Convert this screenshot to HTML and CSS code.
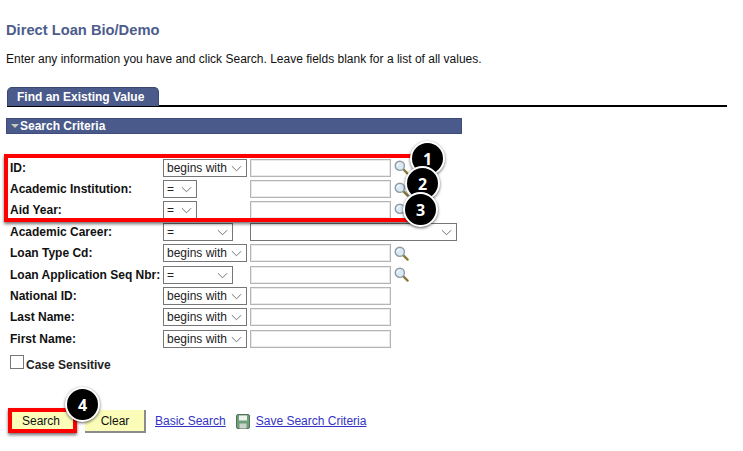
FILE: index.html
```html
<!DOCTYPE html>
<html lang="en">
<head>
<meta charset="utf-8">
<title>Direct Loan Bio/Demo</title>
<link rel="stylesheet" href="styles.css">
</head>
<body>
<svg class="defs" width="0" height="0" aria-hidden="true">
  <symbol id="lens" viewBox="0 0 16 16">
    <line x1="9.5" y1="9.5" x2="14.5" y2="14.5" stroke="#8a7a3a" stroke-width="2.4" stroke-linecap="round"/>
    <circle cx="6.2" cy="6.2" r="4.9" fill="#dbe9f2" stroke="#8c9ca8" stroke-width="1.5"/>
    <path d="M3.5 6a2.8 2.8 0 0 1 2.5-2.6" fill="none" stroke="#fff" stroke-width="1.2"/>
  </symbol>
  <symbol id="chev" viewBox="0 0 12 7">
    <path d="M1 1l5 5 5-5" fill="none" stroke="#666" stroke-width="1"/>
  </symbol>
</svg>
<main class="page">
  <h1 class="title">Direct Loan Bio/Demo</h1>
  <p class="intro">Enter any information you have and click Search. Leave fields blank for a list of all values.</p>
  <div class="tabs"><span class="tab">Find an Existing Value</span></div>
  <div class="band"><span class="caret"></span>Search Criteria</div>
  <div class="form">
    <label>ID:</label>
    <span class="sel w-b">begins with<svg class="chev"><use href="#chev"/></svg></span>
    <span class="inp"></span><svg class="lens"><use href="#lens"/></svg>

    <label>Academic Institution:</label>
    <span class="sel w-s">=<svg class="chev"><use href="#chev"/></svg></span>
    <span class="inp"></span><svg class="lens"><use href="#lens"/></svg>

    <label>Aid Year:</label>
    <span class="sel w-s">=<svg class="chev"><use href="#chev"/></svg></span>
    <span class="inp"></span><svg class="lens"><use href="#lens"/></svg>

    <label>Academic Career:</label>
    <span class="sel w-m">=<svg class="chev"><use href="#chev"/></svg></span>
    <span class="sel w-l"><svg class="chev"><use href="#chev"/></svg></span><span></span>

    <label>Loan Type Cd:</label>
    <span class="sel w-b">begins with<svg class="chev"><use href="#chev"/></svg></span>
    <span class="inp"></span><svg class="lens"><use href="#lens"/></svg>

    <label>Loan Application Seq Nbr:</label>
    <span class="sel w-m">=<svg class="chev"><use href="#chev"/></svg></span>
    <span class="inp"></span><svg class="lens"><use href="#lens"/></svg>

    <label>National ID:</label>
    <span class="sel w-b">begins with<svg class="chev"><use href="#chev"/></svg></span>
    <span class="inp"></span><span></span>

    <label>Last Name:</label>
    <span class="sel w-b">begins with<svg class="chev"><use href="#chev"/></svg></span>
    <span class="inp"></span><span></span>

    <label>First Name:</label>
    <span class="sel w-b">begins with<svg class="chev"><use href="#chev"/></svg></span>
    <span class="inp"></span><span></span>
  </div>
  <div class="case"><span class="check"></span><span>Case Sensitive</span></div>
  <div class="actions">
    <span class="btn btn-search">Search</span>
    <span class="btn btn-clear">Clear</span>
    <a class="link" href="#">Basic Search</a>
    <svg class="save" viewBox="0 0 14 15" aria-hidden="true">
      <rect x="0.5" y="0.5" width="13" height="14" rx="1.5" fill="#6f9f78" stroke="#55715c"/>
      <rect x="3" y="1.5" width="8" height="5" fill="#eef3ee"/>
      <rect x="3.5" y="9.5" width="7" height="5" fill="#c9d3cb"/>
    </svg>
    <a class="link" href="#">Save Search Criteria</a>
  </div>
</main>
<div class="mark mark-fields"></div>
<div class="mark mark-search"></div>
<span class="num n1">1</span>
<span class="num n2">2</span>
<span class="num n3">3</span>
<span class="num n4">4</span>
</body>
</html>
```
FILE: styles.css
```css
* { box-sizing: border-box; }
html, body { margin: 0; padding: 0; background: #fff; }
body {
  width: 743px; height: 451px; overflow: hidden; position: relative;
  font-family: "Liberation Sans", Arial, sans-serif; font-size: 12px; color: #000;
}
.defs { position: absolute; }
.page { padding: 22px 0 0 6px; }
.title { margin: 0; font-size: 14.7px; line-height: 16px; font-weight: bold; color: #4d5c8c; }
.intro { margin: 14px 0 0; font-size: 12px; line-height: 14px; color: #111; }
.tabs { margin: 21px 0 0 1px; height: 20px; border-bottom: 2px solid #000; width: 720px; }
.tab {
  display: inline-block; height: 19px; width: 152px; padding: 2px 0 0 9px;
  background: #4a5a8a; color: #fff; font-weight: bold; font-size: 12px; line-height: 15px;
  border-radius: 5px 5px 0 0; border: 1px solid #3b4872; border-bottom: 0;
}
.band {
  display: flex; align-items: center; margin: 11px 0 0; width: 456px; height: 16px;
  background: #4a5a8a; color: #fff; font-weight: bold; font-size: 12px;
  padding: 0 0 0 4px; border: 1px solid #3f4d7c;
}
.caret {
  width: 0; height: 0; margin: 0 1px 0 0;
  border-left: 4px solid transparent; border-right: 4px solid transparent; border-top: 4px solid #c9c9b8;
}
.form {
  display: grid; margin: 23px 0 0 4px;
  grid-template-columns: 153px 87px 143px 20px;
  grid-auto-rows: 21.4px; align-items: center; justify-items: start; width: 403px;
}
.form label { font-weight: bold; font-size: 12px; color: #111; white-space: nowrap; }
.sel {
  position: relative; display: block; height: 18px; border: 1px solid #767676; background: #fff;
  padding-left: 3px; font-size: 12px; line-height: 17px; color: #222;
}
.w-b { width: 84px; }
.w-s { width: 34px; }
.w-m { width: 70px; }
.w-l { width: 207px; margin-right: -85px; }
.chev { position: absolute; right: 4px; top: 5px; width: 11px; height: 7px; }
.inp { display: block; width: 141px; height: 18px; border: 1px solid #b4b4b4; box-shadow: inset 0 0 0 1px #eaeaea; background: #fff; }
.lens { width: 15px; height: 15px; margin: 0 0 0 1px; }
.case { display: flex; align-items: center; gap: 2px; margin: 6px 0 0 4px; font-weight: bold; font-size: 12px; color: #222; }
.check { width: 14px; height: 14px; border: 1px solid #777; background: #fff; margin-top: -3px; }
.case span:last-child { margin-top: 2px; }
.actions { display: flex; align-items: center; margin: 38px 0 0 3px; }
.btn {
  display: block; height: 23px; text-align: center; font-size: 12px; line-height: 23px; color: #111;
  background: #fafcb8; border-right: 2px solid #8b8b8b; border-bottom: 2px solid #8b8b8b;
}
.btn-search { width: 66px; }
.btn-clear { width: 61px; margin-left: 10px; padding-left: 1px; }
.link { color: #3333c4; font-size: 12px; text-decoration: underline; }
.btn-clear + .link { margin-left: 9px; }
.save { width: 14px; height: 15px; margin: 0 6px 0 10px; }
.mark { position: absolute; border: 4px solid #f00; box-shadow: 0 2px 3px rgba(0,0,0,.55); }
.mark-fields { left: 4px; top: 154px; width: 418px; height: 68px; }
.mark-search { left: 8px; top: 408px; width: 69px; height: 25px; }
.num {
  position: absolute; width: 35px; height: 35px; border-radius: 50%;
  background: #000; color: #fff; border: 2px solid #fff; box-shadow: 0 1px 3px rgba(0,0,0,.6);
  display: flex; align-items: center; justify-content: center;
  font-family: "Open Sans", sans-serif; font-weight: bold; font-size: 16px;
}
.n1 { left: 410px; top: 141px; }
.n2 { left: 405px; top: 166px; }
.n3 { left: 403px; top: 192px; }
.n4 { left: 65px; top: 387px; }
```
